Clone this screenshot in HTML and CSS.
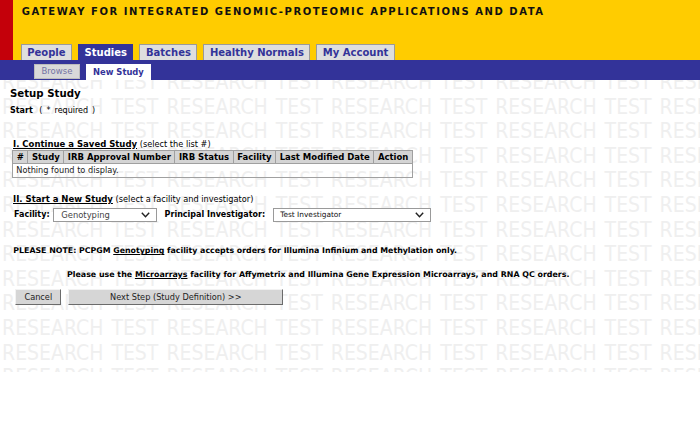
FILE: index.html
```html
<!DOCTYPE html>
<html lang="en">
<head>
<meta charset="utf-8">
<title>GIGPAD - Setup Study</title>
<link rel="stylesheet" href="styles.css">
</head>
<body>
<header class="masthead">
  <div class="redbar"></div>
  <div class="yellow">
    <div class="title">GATEWAY FOR INTEGRATED GENOMIC-PROTEOMIC APPLICATIONS AND DATA</div>
    <nav class="tabs">
      <a class="tab">People</a>
      <a class="tab active">Studies</a>
      <a class="tab">Batches</a>
      <a class="tab">Healthy Normals</a>
      <a class="tab">My Account</a>
    </nav>
  </div>
</header>
<div class="subbar">
  <a class="subtab">Browse</a>
  <a class="subtab active">New Study</a>
</div>
<main class="content">
  <div class="watermark" aria-hidden="true">
    <div>RESEARCH TEST RESEARCH TEST RESEARCH TEST RESEARCH TEST RESEARCH TEST</div>
    <div>RESEARCH TEST RESEARCH TEST RESEARCH TEST RESEARCH TEST RESEARCH TEST</div>
    <div>RESEARCH TEST RESEARCH TEST RESEARCH TEST RESEARCH TEST RESEARCH TEST</div>
    <div>RESEARCH TEST RESEARCH TEST RESEARCH TEST RESEARCH TEST RESEARCH TEST</div>
    <div>RESEARCH TEST RESEARCH TEST RESEARCH TEST RESEARCH TEST RESEARCH TEST</div>
    <div>RESEARCH TEST RESEARCH TEST RESEARCH TEST RESEARCH TEST RESEARCH TEST</div>
    <div>RESEARCH TEST RESEARCH TEST RESEARCH TEST RESEARCH TEST RESEARCH TEST</div>
    <div>RESEARCH TEST RESEARCH TEST RESEARCH TEST RESEARCH TEST RESEARCH TEST</div>
    <div>RESEARCH TEST RESEARCH TEST RESEARCH TEST RESEARCH TEST RESEARCH TEST</div>
    <div>RESEARCH TEST RESEARCH TEST RESEARCH TEST RESEARCH TEST RESEARCH TEST</div>
    <div>RESEARCH TEST RESEARCH TEST RESEARCH TEST RESEARCH TEST RESEARCH TEST</div>
    <div>RESEARCH TEST RESEARCH TEST RESEARCH TEST RESEARCH TEST RESEARCH TEST</div>
    <div>RESEARCH TEST RESEARCH TEST RESEARCH TEST RESEARCH TEST RESEARCH TEST</div>
  </div>
  <div class="inner">
    <h1 class="page-title">Setup Study</h1>
    <div class="step"><b>Start</b> <span class="req">( * required )</span></div>

    <div class="sec-head"><span class="sec-title">I. Continue a Saved Study</span> <span class="hint">(select the list #)</span></div>
    <table class="list">
      <thead>
        <tr><th>#</th><th>Study</th><th>IRB Approval Number</th><th>IRB Status</th><th>Facility</th><th>Last Modified Date</th><th>Action</th></tr>
      </thead>
      <tbody>
        <tr><td colspan="7">Nothing found to display.</td></tr>
      </tbody>
    </table>

    <div class="sec-head sec2"><span class="sec-title">II. Start a New Study</span> <span class="hint">(select a facility and investigator)</span></div>
    <div class="pick-row">
      <span class="lbl">Facility:</span>
      <div class="select sel-fac"><span class="sel-text">Genotyping</span><svg class="chev" width="9" height="6" viewBox="0 0 9 6"><path d="M0.8 0.8 L4.5 4.8 L8.2 0.8" fill="none" stroke="#222" stroke-width="1.4"/></svg></div>
      <span class="lbl lbl-pi">Principal Investigator:</span>
      <div class="select sel-pi"><span class="sel-text small">Test Investigator</span><svg class="chev" width="9" height="6" viewBox="0 0 9 6"><path d="M0.8 0.8 L4.5 4.8 L8.2 0.8" fill="none" stroke="#222" stroke-width="1.4"/></svg></div>
    </div>

    <p class="note">PLEASE NOTE: PCPGM <u>Genotyping</u> facility accepts orders for Illumina Infinium and Methylation only.</p>
    <p class="note note2">Please use the <u>Microarrays</u> facility for Affymetrix and Illumina Gene Expression Microarrays, and RNA QC orders.</p>

    <div class="buttons">
      <button class="btn btn-cancel">Cancel</button>
      <button class="btn btn-next">Next Step (Study Definition) &gt;&gt;</button>
    </div>
  </div>
</main>
</body>
</html>
```

FILE: styles.css
```css
html, body {
  margin: 0;
  padding: 0;
  background: #ffffff;
}
body {
  font-family: "DejaVu Sans", Verdana, sans-serif;
  color: #000;
}

/* ---------- masthead ---------- */
.masthead {
  display: flex;
  height: 60px;
}
.redbar {
  width: 13px;
  background: #c4000a;
}
.yellow {
  flex: 1;
  background: #ffcc00;
  display: flex;
  flex-direction: column;
  justify-content: space-between;
}
.title {
  font-size: 10px;
  font-weight: bold;
  letter-spacing: 1.55px;
  line-height: 12px;
  padding: 5.5px 0 0 8.7px;
  color: #111;
  white-space: nowrap;
}
.tabs {
  display: flex;
  gap: 6px;
  padding-left: 7.7px;
  height: 16px;
}
.tab {
  box-sizing: border-box;
  height: 16px;
  padding: 1px 5.5px 0;
  border: 1px solid #9a9a9a;
  border-bottom: none;
  background: #dedede;
  color: #333399;
  font-size: 10px;
  font-weight: bold;
  line-height: 14px;
  white-space: nowrap;
}
.tab.active {
  background: #333399;
  border-color: #333399;
  color: #ffffff;
}

/* ---------- sub navigation ---------- */
.subbar {
  height: 20px;
  background: #333399;
  display: flex;
  align-items: flex-end;
  gap: 6px;
  padding-left: 34.3px;
}
.subtab {
  box-sizing: border-box;
  height: 15px;
  margin-bottom: 1px;
  padding: 0 6.2px;
  background: #d9d9d9;
  border: 1px solid #bdbdbd;
  color: #7474a4;
  font-size: 8.5px;
  line-height: 13px;
}
.subtab.active {
  height: 16px;
  margin-bottom: 0;
  border: none;
  padding: 0 7.4px;
  background: #ffffff;
  color: #333399;
  font-weight: bold;
  font-size: 8.4px;
  line-height: 16px;
}

/* ---------- content ---------- */
.content {
  position: relative;
  height: 292px;
  overflow: hidden;
}
.watermark {
  position: absolute;
  left: 2px;
  top: -10px;
  font-family: "DejaVu Sans Condensed", "DejaVu Sans", sans-serif;
  font-stretch: condensed;
  font-size: 21px;
  line-height: 24.6px;
  color: #efefef;
  white-space: nowrap;
  word-spacing: 2px;
  z-index: 0;
  user-select: none;
}
.inner {
  position: relative;
  z-index: 1;
  padding-left: 10px;
  font-size: 8px;
  line-height: 10px;
}
.page-title {
  margin: 7.5px 0 0;
  font-size: 10.2px;
  font-weight: bold;
  line-height: 12px;
}
.step {
  margin-top: 6px;
  font-size: 8px;
  line-height: 10px;
}
.req {
  font-size: 8px;
  margin-left: 4px;
  word-spacing: 1.5px;
}
.sec-head {
  margin-top: 23px;
  padding-left: 3px;
  font-size: 8.5px;
  line-height: 10px;
}
.sec-title {
  font-weight: bold;
  text-decoration: underline;
}
.hint {
  font-size: 8.2px;
}
.list {
  margin: 1px 0 0 2.3px;
  border-collapse: collapse;
  border: 1px solid #a0a0a0;
}
.list th {
  background: #d4d4d4;
  border: 1px solid #a0a0a0;
  font-size: 8.5px;
  font-weight: bold;
  line-height: 11px;
  padding: 1px 3.5px 0;
  white-space: nowrap;
  text-align: left;
}
.list td {
  font-size: 8.2px;
  line-height: 13px;
  padding: 0 3px;
  color: #222;
}
.sec2 {
  margin-top: 16.5px;
}
.pick-row {
  display: flex;
  align-items: center;
  margin-top: 3.5px;
  padding-left: 4px;
  height: 14px;
  font-size: 8px;
}
.lbl {
  font-weight: bold;
  width: 39.3px;
}
.lbl-pi {
  width: auto;
  margin: 0 8px 0 7.3px;
}
.select {
  box-sizing: border-box;
  height: 14px;
  border: 1px solid #9a9a9a;
  background: #fff;
  display: flex;
  align-items: center;
  justify-content: space-between;
  padding: 0 6px 0 7px;
}
.sel-fac { width: 104px; }
.sel-pi { width: 158px; padding-left: 6px; }
.sel-text {
  font-size: 8.4px;
  color: #444;
}
.sel-text.small {
  font-size: 7.4px;
  color: #111;
}
.chev { display: block; }
.note {
  margin: 24.7px 0 0;
  padding-left: 3.3px;
  font-size: 7.85px;
  font-weight: bold;
  line-height: 10px;
  white-space: nowrap;
}
.note2 {
  margin-top: 13.5px;
  padding-left: 57px;
  font-size: 7.9px;
}
.buttons {
  display: flex;
  gap: 7px;
  margin-top: 9.8px;
  padding-left: 5.3px;
}
.btn {
  box-sizing: border-box;
  height: 16px;
  margin: 0;
  padding: 0;
  background: #d6d6d6;
  border: 1px solid;
  border-color: #f2f2f2 #6b6b6b #6b6b6b #f2f2f2;
  font-family: "DejaVu Sans", Verdana, sans-serif;
  font-size: 8.2px;
  color: #222;
  line-height: 14px;
}
.btn-cancel { width: 46px; }
.btn-next { width: 215px; }
```
